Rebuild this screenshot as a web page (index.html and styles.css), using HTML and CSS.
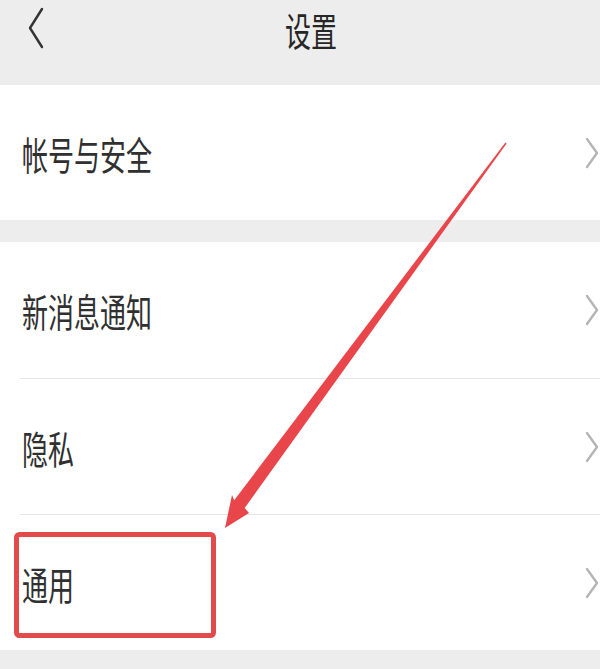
FILE: index.html
```html
<!DOCTYPE html>
<html lang="zh">
<head>
<meta charset="utf-8">
<title>设置</title>
<link rel="stylesheet" href="styles.css">
</head>
<body>
<div class="page">
  <header class="topbar">
    <div class="back">
      <svg width="16" height="42" viewBox="0 0 16 42"><polyline points="14,2 2,21 14,40" fill="none" stroke="#333" stroke-width="2.4" stroke-linecap="round" stroke-linejoin="round"/></svg>
    </div>
    <div class="title"><span class="txt">设置</span></div>
    <div></div>
  </header>

  <section class="group">
    <div class="row"><span class="txt">帐号与安全</span><span class="chev"><svg width="14" height="32" viewBox="0 0 14 32"><polyline points="2,2 12,16 2,30" fill="none" stroke="#b5b5b5" stroke-width="2.4" stroke-linecap="round" stroke-linejoin="round"/></svg></span></div>
  </section>

  <section class="group group-2">
    <div class="row"><span class="txt">新消息通知</span><span class="chev"><svg width="14" height="32" viewBox="0 0 14 32"><polyline points="2,2 12,16 2,30" fill="none" stroke="#b5b5b5" stroke-width="2.4" stroke-linecap="round" stroke-linejoin="round"/></svg></span></div>
    <div class="row"><span class="txt">隐私</span><span class="chev"><svg width="14" height="32" viewBox="0 0 14 32"><polyline points="2,2 12,16 2,30" fill="none" stroke="#b5b5b5" stroke-width="2.4" stroke-linecap="round" stroke-linejoin="round"/></svg></span></div>
    <div class="row"><span class="txt">通用</span><span class="chev"><svg width="14" height="32" viewBox="0 0 14 32"><polyline points="2,2 12,16 2,30" fill="none" stroke="#b5b5b5" stroke-width="2.4" stroke-linecap="round" stroke-linejoin="round"/></svg></span></div>
  </section>

  <svg class="annot" width="600" height="669" viewBox="0 0 600 669">
    <rect x="16.5" y="534.5" width="197" height="101" rx="3" fill="none" stroke="#e24a4c" stroke-width="5"/>
    <polygon points="506.6,143.4 244.7,507.9 249,513 225,528 232,495 234.2,500.2 505.4,142.6" fill="#e8464a"/>
  </svg>
</div>
</body>
</html>
```

FILE: styles.css
```css
html, body {
  margin: 0;
  padding: 0;
}
body {
  background: #ededed;
  font-family: "Noto Sans CJK SC", "Noto Sans", sans-serif;
  color: #303030;
}
.page {
  position: relative;
  width: 600px;
  height: 669px;
  overflow: hidden;
}
.topbar {
  height: 85px;
  box-sizing: border-box;
  display: grid;
  grid-template-columns: 1fr auto 1fr;
  align-items: start;
  background: #ededed;
}
.back {
  padding-left: 28px;
  padding-top: 7px;
  display: flex;
}
.title {
  margin-left: 22px;
  padding-top: 10px;
  padding-bottom: 12px;
  color: #262626;
}
.txt {
  display: inline-block;
  font-size: 26px;
  line-height: 1.45;
  transform: scaleY(1.5);
}
.group {
  background: #fff;
}
.group-2 {
  margin-top: 22px;
}
.row {
  height: 135px;
  margin-left: 20px;
  padding-left: 2px;
  padding-right: 1px;
  display: flex;
  align-items: center;
  justify-content: space-between;
  box-sizing: border-box;
}
.group-2 .row {
  height: 136px;
}
.row + .row {
  border-top: 1px solid #e6e6e6;
}
.chev {
  display: flex;
  align-items: center;
}
.annot {
  position: absolute;
  left: 0;
  top: 0;
  pointer-events: none;
}
```
